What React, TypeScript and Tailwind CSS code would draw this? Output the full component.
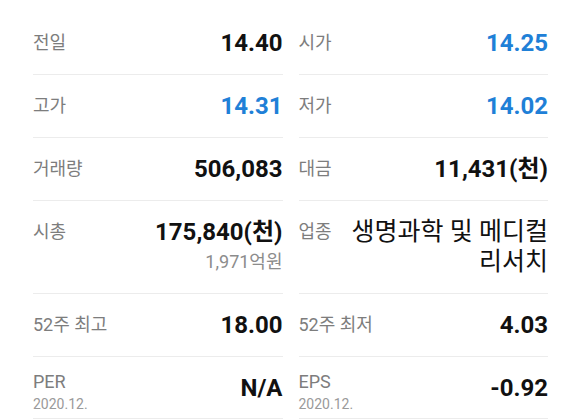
import React from "react";

const FONT = { fontFamily: "Roboto, 'Noto Sans CJK KR', sans-serif" };

type CellProps = {
  label: string;
  sub?: string;
  value?: React.ReactNode;
  valueSub?: string;
  blue?: boolean;
  top?: boolean;
};

function Cell({ label, sub, value, valueSub, blue, top }: CellProps) {
  return (
    <div
      className={`flex justify-between border-b border-[#ececec] ${
        sub ? "h-[62px] items-center" : top ? "items-start py-4" : "items-center py-4"
      }`}
    >
      {sub ? (
        <div className="flex flex-col pt-[11px]">
          <span className="text-[18px] leading-[22px] text-[#7d7d7d]">{label}</span>
          <span className="text-[14px] leading-[22px] text-[#9a9a9a]">{sub}</span>
        </div>
      ) : (
        <span className="shrink-0 text-[18px] leading-[30px] text-[#7d7d7d]">{label}</span>
      )}
      <div className="flex flex-col items-end text-right">
        <span
          className={`text-[24px] font-bold leading-[30px] ${
            blue ? "text-[#1f80d7]" : "text-[#111111]"
          }`}
        >
          {value}
        </span>
        {valueSub && (
          <span className="text-[18px] leading-[30px] text-[#8c8c8c]">{valueSub}</span>
        )}
      </div>
    </div>
  );
}

export default function App() {
  return (
    <div className="h-[419px] w-[580px] overflow-hidden bg-white pl-[33px] pr-[32px] pt-[12px]" style={FONT}>
      <div className="grid grid-cols-2 gap-x-4">
        <Cell label="전일" value="14.40" />
        <Cell label="시가" value="14.25" blue />
        <Cell label="고가" value="14.31" blue />
        <Cell label="저가" value="14.02" blue />
        <Cell label="거래량" value="506,083" />
        <Cell label="대금" value="11,431(천)" />
        <Cell label="시총" value="175,840(천)" valueSub="1,971억원" top />
        <div className="flex items-start justify-between gap-4 border-b border-[#ececec] py-4">
          <span className="shrink-0 text-[18px] leading-[30px] text-[#7d7d7d]">업종</span>
          <span className="break-keep text-right text-[25px] font-normal leading-[30px] text-[#111111]">
            생명과학 및 메디컬 리서치
          </span>
        </div>
        <Cell label="52주 최고" value="18.00" />
        <Cell label="52주 최저" value="4.03" />
        <Cell label="PER" sub="2020.12." value="N/A" />
        <Cell label="EPS" sub="2020.12." value="-0.92" />
      </div>
    </div>
  );
}
